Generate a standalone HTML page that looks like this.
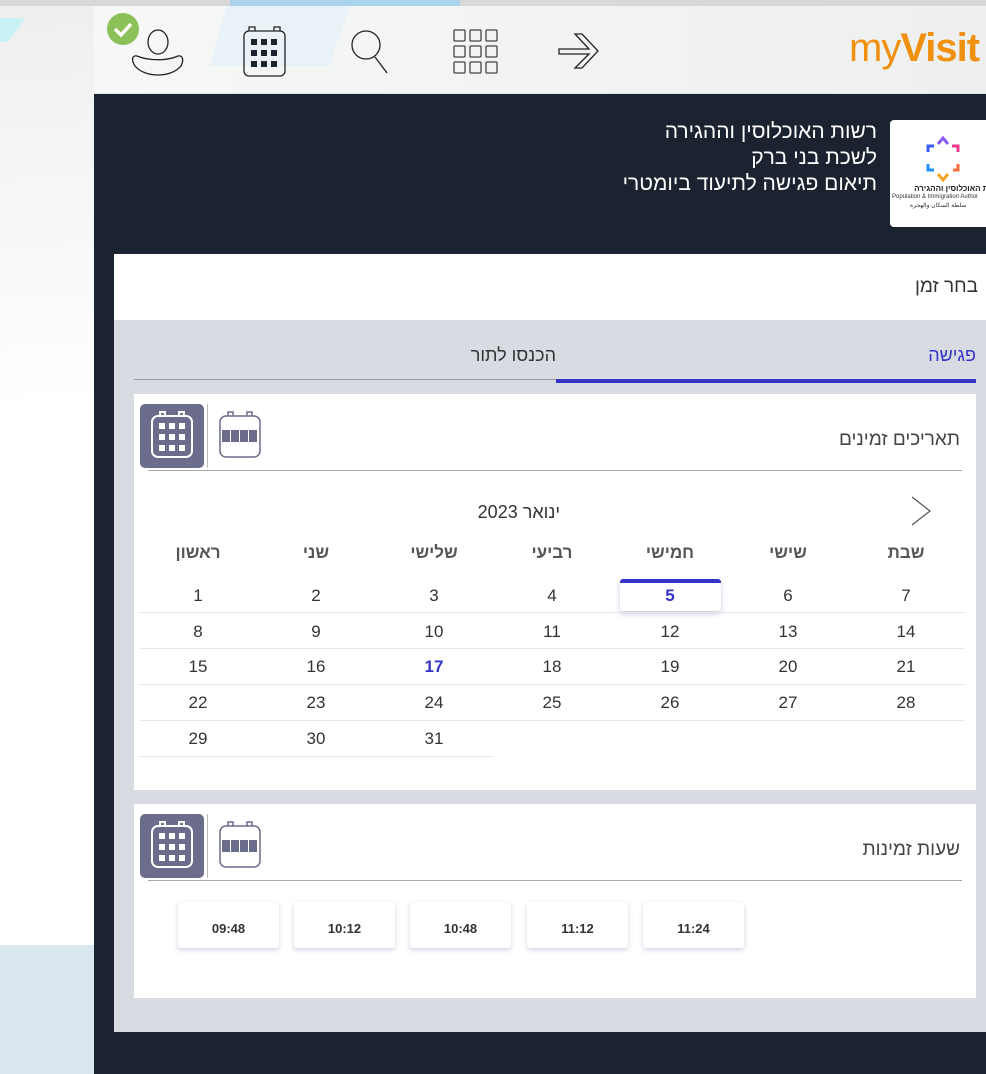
<!DOCTYPE html>
<html><head><meta charset="utf-8"><style>
*{margin:0;padding:0;box-sizing:border-box}
body{width:986px;height:1074px;overflow:hidden;background:#fff;font-family:"Liberation Sans","Noto Sans CJK SC",sans-serif;position:relative}
.a{position:absolute}
.t{font-size:19px;color:#444}
.day{position:absolute;width:118px;text-align:center;font-size:17px;color:#333}
.hd{font-weight:bold;color:#555;font-size:17px}
.tb{position:absolute;top:902px;width:101px;height:46px;background:#fff;border-radius:3px;box-shadow:0 2px 5px rgba(80,80,140,.25);font-size:13px;font-weight:bold;color:#333;text-align:center;line-height:54px}
</style></head><body>
<div class="a" style="left:0;top:0;width:94px;height:400px;background:linear-gradient(175deg,#eeeeee,#fff)"></div>
<div class="a" style="left:0;top:945px;width:94px;height:129px;background:#dbe7ee"></div>
<div class="a" style="left:0;top:0;width:986px;height:6px;background:#d8d8d8"></div>
<div class="a" style="left:0;top:18px;width:26px;height:24px;background:#c9f2f4;clip-path:polygon(0 0,100% 0,30% 100%,0 100%)"></div>
<div class="a" style="left:230px;top:0;width:230px;height:6px;background:#a9d4ec"></div>
<!-- header -->
<div class="a" style="left:94px;top:6px;width:892px;height:88px;background:linear-gradient(90deg,#f6f7f7,#eef0f0);border-bottom:1px solid #e4e4e4"></div>
<div class="a" style="left:210px;top:6px;width:140px;height:60px;background:#e4f1f7;clip-path:polygon(12% 0,100% 0,85% 100%,0 100%);opacity:.7"></div>
<svg class="a" style="left:94px;top:6px" width="540" height="88" viewBox="0 0 540 88" fill="none" stroke="#222" stroke-width="1.3">
<ellipse cx="64" cy="36" rx="10" ry="12"/>
<path d="M43 50c12 5 30 5 41 0c5-1 6 4 3 10c-5 6-14 9-23 9s-18-3-23-9c-4-6-3-11 2-10z"/>
<circle cx="29" cy="23" r="16" fill="#8cc15a" stroke="none"/>
<path d="M21 23l6 6 10-11" stroke="#fff" stroke-width="3.5"/>
<rect x="150" y="25" width="41" height="45" rx="5"/>
<path d="M155 25v-4h6v4M180 25v-4h6v4"/>
<g fill="#1b2330" stroke="none"><rect x="157" y="33" width="6" height="6"/><rect x="167" y="33" width="6" height="6"/><rect x="177" y="33" width="6" height="6"/><rect x="157" y="44" width="6" height="6"/><rect x="167" y="44" width="6" height="6"/><rect x="177" y="44" width="6" height="6"/><rect x="157" y="55" width="6" height="6"/><rect x="167" y="55" width="6" height="6"/><rect x="177" y="55" width="6" height="6"/></g>
<circle cx="272" cy="39" r="14"/><path d="M281 51l12 16"/>
<g stroke="#444"><rect x="360" y="24" width="11" height="11" rx="1"/><rect x="376" y="24" width="11" height="11" rx="1"/><rect x="392" y="24" width="11" height="11" rx="1"/><rect x="360" y="40" width="11" height="11" rx="1"/><rect x="376" y="40" width="11" height="11" rx="1"/><rect x="392" y="40" width="11" height="11" rx="1"/><rect x="360" y="56" width="11" height="11" rx="1"/><rect x="376" y="56" width="11" height="11" rx="1"/><rect x="392" y="56" width="11" height="11" rx="1"/></g>
<path d="M465 43h30l-14-15h7l16 17-16 17h-7l14-14h-30z"/>
</svg>
<div class="a" style="left:849px;top:26px;font-size:40px;color:#f0900f;letter-spacing:-1px;white-space:nowrap">my<b>Visit</b></div>
<!-- dark -->
<div class="a" style="left:94px;top:94px;width:892px;height:980px;background:#1b2330"></div>
<div class="a" style="left:560px;top:119px;width:317px;text-align:right;direction:rtl;color:#fff;font-size:21px;line-height:26px">רשות האוכלוסין וההגירה<br>לשכת בני ברק<br>תיאום פגישה לתיעוד ביומטרי</div>
<div class="a" style="left:890px;top:120px;width:100px;height:107px;background:#fff;border-radius:4px;overflow:hidden">
<svg class="a" style="left:34px;top:16px" width="40" height="46" viewBox="0 0 40 46" stroke-width="3" fill="none"><path d="M14 8l5-6 5 6" stroke="#8a5cf5"/><path d="M28 10h6v6" stroke="#e83a8c"/><path d="M34 28v6h-5" stroke="#ff6b3a"/><path d="M24 38l-5 6-5-6" stroke="#f5a623"/><path d="M10 34h-6v-6" stroke="#1e90ff"/><path d="M4 16v-6h6" stroke="#3a5cf5"/></svg>
<div class="a" style="left:2px;top:64px;width:110px;font-size:8px;font-weight:bold;color:#222;direction:rtl;text-align:right;white-space:nowrap">רשות האוכלוסין וההגירה</div>
<div class="a" style="left:2px;top:74px;font-size:6px;color:#333;white-space:nowrap">Population &amp; Immigration Author</div>
<div class="a" style="left:20px;top:82px;font-size:6px;color:#333;white-space:nowrap">سلطة السكان والهجرة</div>
</div>
<!-- panels -->
<div class="a" style="left:114px;top:254px;width:872px;height:66px;background:#fff"></div>
<div class="a t" style="left:800px;top:276px;width:178px;text-align:right;color:#333">בחר זמן</div>
<div class="a" style="left:114px;top:320px;width:872px;height:712px;background:#d9dbe3"></div>
<div class="a" style="left:134px;top:379px;width:842px;height:1px;background:#999"></div>
<div class="a" style="left:556px;top:379px;width:420px;height:4px;background:#3434c8"></div>
<div class="a" style="left:900px;top:345px;width:76px;text-align:right;font-size:18px;color:#3434c8">פגישה</div>
<div class="a" style="left:400px;top:345px;width:156px;text-align:right;font-size:18px;color:#333">הכנסו לתור</div>
<!-- card1 -->
<div class="a" style="left:134px;top:394px;width:842px;height:396px;background:#fff"></div>
<div class="a" style="left:148px;top:470px;width:814px;height:1px;background:#aaa"></div>
<div class="a" style="left:207px;top:404px;width:1px;height:64px;background:#bbb"></div>
<div class="a" style="left:140px;top:404px;width:64px;height:64px;background:#6c6c8c;border-radius:5px"></div>
<svg class="a" style="left:150px;top:410px" width="44" height="50" viewBox="0 0 44 50" fill="none" stroke="#fff" stroke-width="2"><rect x="2" y="6" width="40" height="41" rx="6"/><path d="M10 6V2h5v4M29 6V2h5v4"/><g fill="#fff" stroke="none"><rect x="9" y="13" width="6" height="6"/><rect x="19" y="13" width="6" height="6"/><rect x="29" y="13" width="6" height="6"/><rect x="9" y="24" width="6" height="6"/><rect x="19" y="24" width="6" height="6"/><rect x="29" y="24" width="6" height="6"/><rect x="9" y="35" width="6" height="6"/><rect x="19" y="35" width="6" height="6"/><rect x="29" y="35" width="6" height="6"/></g></svg>
<svg class="a" style="left:218px;top:410px" width="44" height="50" viewBox="0 0 44 50" fill="none" stroke="#6c6c8c" stroke-width="1.5"><rect x="2" y="6" width="40" height="41" rx="6"/><path d="M10 6V2h5v4M29 6V2h5v4"/><g fill="#6c6c8c" stroke="none"><rect x="4" y="20" width="8" height="12"/><rect x="13" y="20" width="8" height="12"/><rect x="22" y="20" width="8" height="12"/><rect x="31" y="20" width="8" height="12"/></g></svg>
<div class="a t" style="left:700px;top:429px;width:260px;text-align:right;direction:rtl">תאריכים זמינים</div>
<svg class="a" style="left:910px;top:495px" width="24" height="32"><path d="M2 2l18 14-18 14" fill="none" stroke="#555" stroke-width="1.2"/></svg>
<div class="a" style="left:400px;top:502px;width:160px;text-align:right;direction:rtl;font-size:18px;color:#333">ינואר 2023</div>
<div class="day hd" style="left:847px;top:543px">שבת</div>
<div class="day hd" style="left:729px;top:543px">שישי</div>
<div class="day hd" style="left:611px;top:543px">חמישי</div>
<div class="day hd" style="left:493px;top:543px">רביעי</div>
<div class="day hd" style="left:375px;top:543px">שלישי</div>
<div class="day hd" style="left:257px;top:543px">שני</div>
<div class="day hd" style="left:139px;top:543px">ראשון</div>
<div class="a" style="left:620px;top:579px;width:101px;height:32px;background:#fff;border-radius:3px;box-shadow:0 3px 6px rgba(80,80,160,.3);border-top:4px solid #3434c8"></div>
<div class="a" style="left:140px;top:612px;width:825px;height:1px;background:#e6e6e6"></div>
<div class="a" style="left:140px;top:648px;width:825px;height:1px;background:#e6e6e6"></div>
<div class="a" style="left:140px;top:684px;width:825px;height:1px;background:#e6e6e6"></div>
<div class="a" style="left:140px;top:720px;width:825px;height:1px;background:#e6e6e6"></div>
<div class="a" style="left:140px;top:756px;width:353px;height:1px;background:#e6e6e6"></div>
<div class="day" style="left:847px;top:586px">7</div><div class="day" style="left:729px;top:586px">6</div><div class="day" style="left:611px;top:586px;color:#3434c8;font-weight:bold">5</div><div class="day" style="left:493px;top:586px">4</div><div class="day" style="left:375px;top:586px">3</div><div class="day" style="left:257px;top:586px">2</div><div class="day" style="left:139px;top:586px">1</div>
<div class="day" style="left:847px;top:622px">14</div><div class="day" style="left:729px;top:622px">13</div><div class="day" style="left:611px;top:622px">12</div><div class="day" style="left:493px;top:622px">11</div><div class="day" style="left:375px;top:622px">10</div><div class="day" style="left:257px;top:622px">9</div><div class="day" style="left:139px;top:622px">8</div>
<div class="day" style="left:847px;top:657px">21</div><div class="day" style="left:729px;top:657px">20</div><div class="day" style="left:611px;top:657px">19</div><div class="day" style="left:493px;top:657px">18</div><div class="day" style="left:375px;top:657px;color:#3434c8;font-weight:bold">17</div><div class="day" style="left:257px;top:657px">16</div><div class="day" style="left:139px;top:657px">15</div>
<div class="day" style="left:847px;top:693px">28</div><div class="day" style="left:729px;top:693px">27</div><div class="day" style="left:611px;top:693px">26</div><div class="day" style="left:493px;top:693px">25</div><div class="day" style="left:375px;top:693px">24</div><div class="day" style="left:257px;top:693px">23</div><div class="day" style="left:139px;top:693px">22</div>
<div class="day" style="left:375px;top:729px">31</div><div class="day" style="left:257px;top:729px">30</div><div class="day" style="left:139px;top:729px">29</div>
<!-- card2 -->
<div class="a" style="left:134px;top:804px;width:842px;height:194px;background:#fff"></div>
<div class="a" style="left:148px;top:880px;width:814px;height:1px;background:#aaa"></div>
<div class="a" style="left:207px;top:814px;width:1px;height:64px;background:#bbb"></div>
<div class="a" style="left:140px;top:814px;width:64px;height:64px;background:#6c6c8c;border-radius:5px"></div>
<svg class="a" style="left:150px;top:820px" width="44" height="50" viewBox="0 0 44 50" fill="none" stroke="#fff" stroke-width="2"><rect x="2" y="6" width="40" height="41" rx="6"/><path d="M10 6V2h5v4M29 6V2h5v4"/><g fill="#fff" stroke="none"><rect x="9" y="13" width="6" height="6"/><rect x="19" y="13" width="6" height="6"/><rect x="29" y="13" width="6" height="6"/><rect x="9" y="24" width="6" height="6"/><rect x="19" y="24" width="6" height="6"/><rect x="29" y="24" width="6" height="6"/><rect x="9" y="35" width="6" height="6"/><rect x="19" y="35" width="6" height="6"/><rect x="29" y="35" width="6" height="6"/></g></svg>
<svg class="a" style="left:218px;top:820px" width="44" height="50" viewBox="0 0 44 50" fill="none" stroke="#6c6c8c" stroke-width="1.5"><rect x="2" y="6" width="40" height="41" rx="6"/><path d="M10 6V2h5v4M29 6V2h5v4"/><g fill="#6c6c8c" stroke="none"><rect x="4" y="20" width="8" height="12"/><rect x="13" y="20" width="8" height="12"/><rect x="22" y="20" width="8" height="12"/><rect x="31" y="20" width="8" height="12"/></g></svg>
<div class="a t" style="left:700px;top:839px;width:260px;text-align:right;direction:rtl">שעות זמינות</div>
<div class="tb" style="left:178px">09:48</div>
<div class="tb" style="left:294px">10:12</div>
<div class="tb" style="left:410px">10:48</div>
<div class="tb" style="left:527px">11:12</div>
<div class="tb" style="left:643px">11:24</div>
</body></html>
